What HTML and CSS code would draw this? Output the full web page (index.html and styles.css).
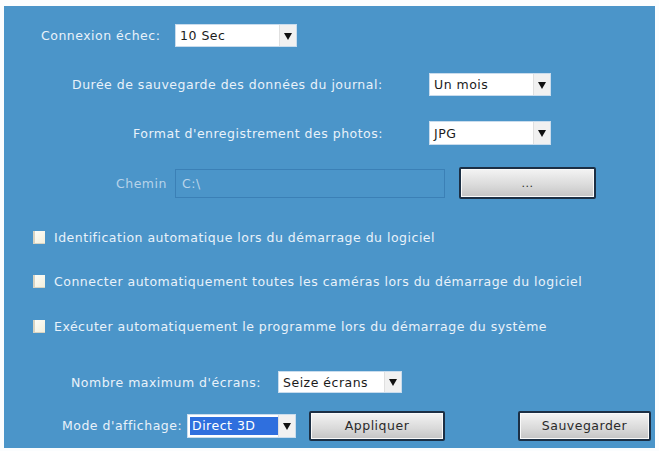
FILE: index.html
```html
<!DOCTYPE html>
<html lang="fr">
<head>
  <meta charset="UTF-8">
  <title>Paramètres système</title>
  <link rel="stylesheet" href="styles.css">
</head>
<body>
  <div class="panel">

    <div class="row row-connexion">
      <span class="label">Connexion échec:</span>
      <div class="select sel-connexion"><span class="txt">10 Sec</span><span class="arrow"></span></div>
    </div>

    <div class="row row-duree">
      <span class="label">Durée de sauvegarde des données du journal:</span>
      <div class="select sel-duree"><span class="txt">Un mois</span><span class="arrow"></span></div>
    </div>

    <div class="row row-format">
      <span class="label">Format d'enregistrement des photos:</span>
      <div class="select sel-format"><span class="txt">JPG</span><span class="arrow"></span></div>
    </div>

    <div class="row row-chemin">
      <span class="label dim">Chemin</span>
      <div class="path-input">C:\</div>
      <button class="btn btn-browse">...</button>
    </div>

    <div class="row check-row check-1">
      <span class="checkbox"></span>
      <span class="label">Identification automatique lors du démarrage du logiciel</span>
    </div>

    <div class="row check-row check-2">
      <span class="checkbox"></span>
      <span class="label">Connecter automatiquement toutes les caméras lors du démarrage du logiciel</span>
    </div>

    <div class="row check-row check-3">
      <span class="checkbox"></span>
      <span class="label">Exécuter automatiquement le programme lors du démarrage du système</span>
    </div>

    <div class="row row-ecrans">
      <span class="label">Nombre maximum d'écrans:</span>
      <div class="select sel-ecrans"><span class="txt">Seize écrans</span><span class="arrow"></span></div>
    </div>

    <div class="row row-mode">
      <span class="label">Mode d'affichage:</span>
      <div class="select sel-mode"><span class="txt selected">Direct 3D</span><span class="arrow"></span></div>
      <button class="btn btn-apply">Appliquer</button>
      <button class="btn btn-save">Sauvegarder</button>
    </div>

  </div>
</body>
</html>
```

FILE: styles.css
```css
body {
  margin: 0;
  background: #fbfdfe;
  font-family: "DejaVu Sans", Verdana, sans-serif;
  font-size: 12.5px;
  letter-spacing: 0.5px;
}

.panel {
  margin: 6px 0 0 4px;
  width: 651px;
  height: 442px;
  background: #4b95c9;
  box-sizing: border-box;
  display: flex;
  flex-direction: column;
}

.row {
  display: flex;
  align-items: center;
}

.label {
  color: #e9f2fa;
  white-space: nowrap;
}

.label.dim {
  color: #b7d3ea;
}

/* rows */
.row-connexion { margin-top: 18px; height: 23px; padding-left: 37px; }
.row-connexion .label { width: 134px; }

.row-duree { margin-top: 26px; height: 23px; padding-left: 68px; }
.row-duree .label { width: 357px; }

.row-format { margin-top: 25px; height: 24px; padding-left: 129px; }
.row-format .label { width: 296px; }

.row-chemin { margin-top: 22px; height: 32px; padding-left: 112px; }
.row-chemin .label { width: 59px; }

.check-row { height: 16px; padding-left: 29px; }
.check-1 { margin-top: 30px; }
.check-2 { margin-top: 28px; }
.check-3 { margin-top: 29px; }

.row-ecrans { margin-top: 37px; height: 22px; padding-left: 67px; }
.row-ecrans .label { width: 207px; }

.row-mode { margin-top: 17px; height: 31px; padding-left: 58px; }
.row-mode .label { width: 125px; }

/* dropdowns */
.select {
  display: flex;
  height: 100%;
  background: #fff;
  border: 1px solid #c9dced;
  box-sizing: border-box;
  color: #1b1b1b;
  font-size: 12.5px;
}

.select .txt {
  flex: 1;
  padding-left: 4px;
  display: flex;
  align-items: center;
}

.select .txt.selected {
  background: #2f6fde;
  color: #fff;
  margin: 2px 0 2px 2px;
  padding-left: 2px;
}

.select .arrow {
  width: 16px;
  background: #f1f1f1;
  border-left: 1px solid #e0e0e0;
  position: relative;
}

.select .arrow::after {
  content: "";
  position: absolute;
  left: 4px;
  top: 50%;
  margin-top: -3px;
  border-left: 4px solid transparent;
  border-right: 4px solid transparent;
  border-top: 7px solid #111;
}

.sel-connexion { width: 122px; }
.sel-duree { width: 122px; }
.sel-format { width: 122px; }
.sel-ecrans { width: 124px; height: 22px; }
.sel-mode { width: 109px; height: 24px; margin-right: 13px; }

/* path */
.path-input {
  width: 270px;
  height: 29px;
  box-sizing: border-box;
  border: 1px solid #3b80b6;
  color: #b9d4ea;
  padding-left: 6px;
  display: flex;
  align-items: center;
  margin-right: 14px;
}

/* buttons */
.btn {
  font-family: "DejaVu Sans", Verdana, sans-serif;
  font-size: 12.5px;
  letter-spacing: 0.5px;
  color: #2a2a2a;
  border: 2px solid #1c2f44;
  border-radius: 2px;
  background: linear-gradient(#f4f4f4, #d9d9d9 60%, #c4c4c4);
  box-shadow: inset 0 0 0 1px #fafafa;
  padding: 0;
}

.btn-browse { width: 137px; height: 32px; font-size: 11px; }
.btn-apply { width: 136px; height: 30px; margin-right: 73px; }
.btn-save { width: 133px; height: 30px; }

/* checkboxes */
.checkbox {
  width: 12px;
  height: 13px;
  background: linear-gradient(135deg, #fdfdf8, #f3efdc);
  border-left: 2px solid #d9d4c2;
  border-bottom: 1px solid #d9d4c2;
  box-sizing: border-box;
  margin-right: 9px;
}
```
